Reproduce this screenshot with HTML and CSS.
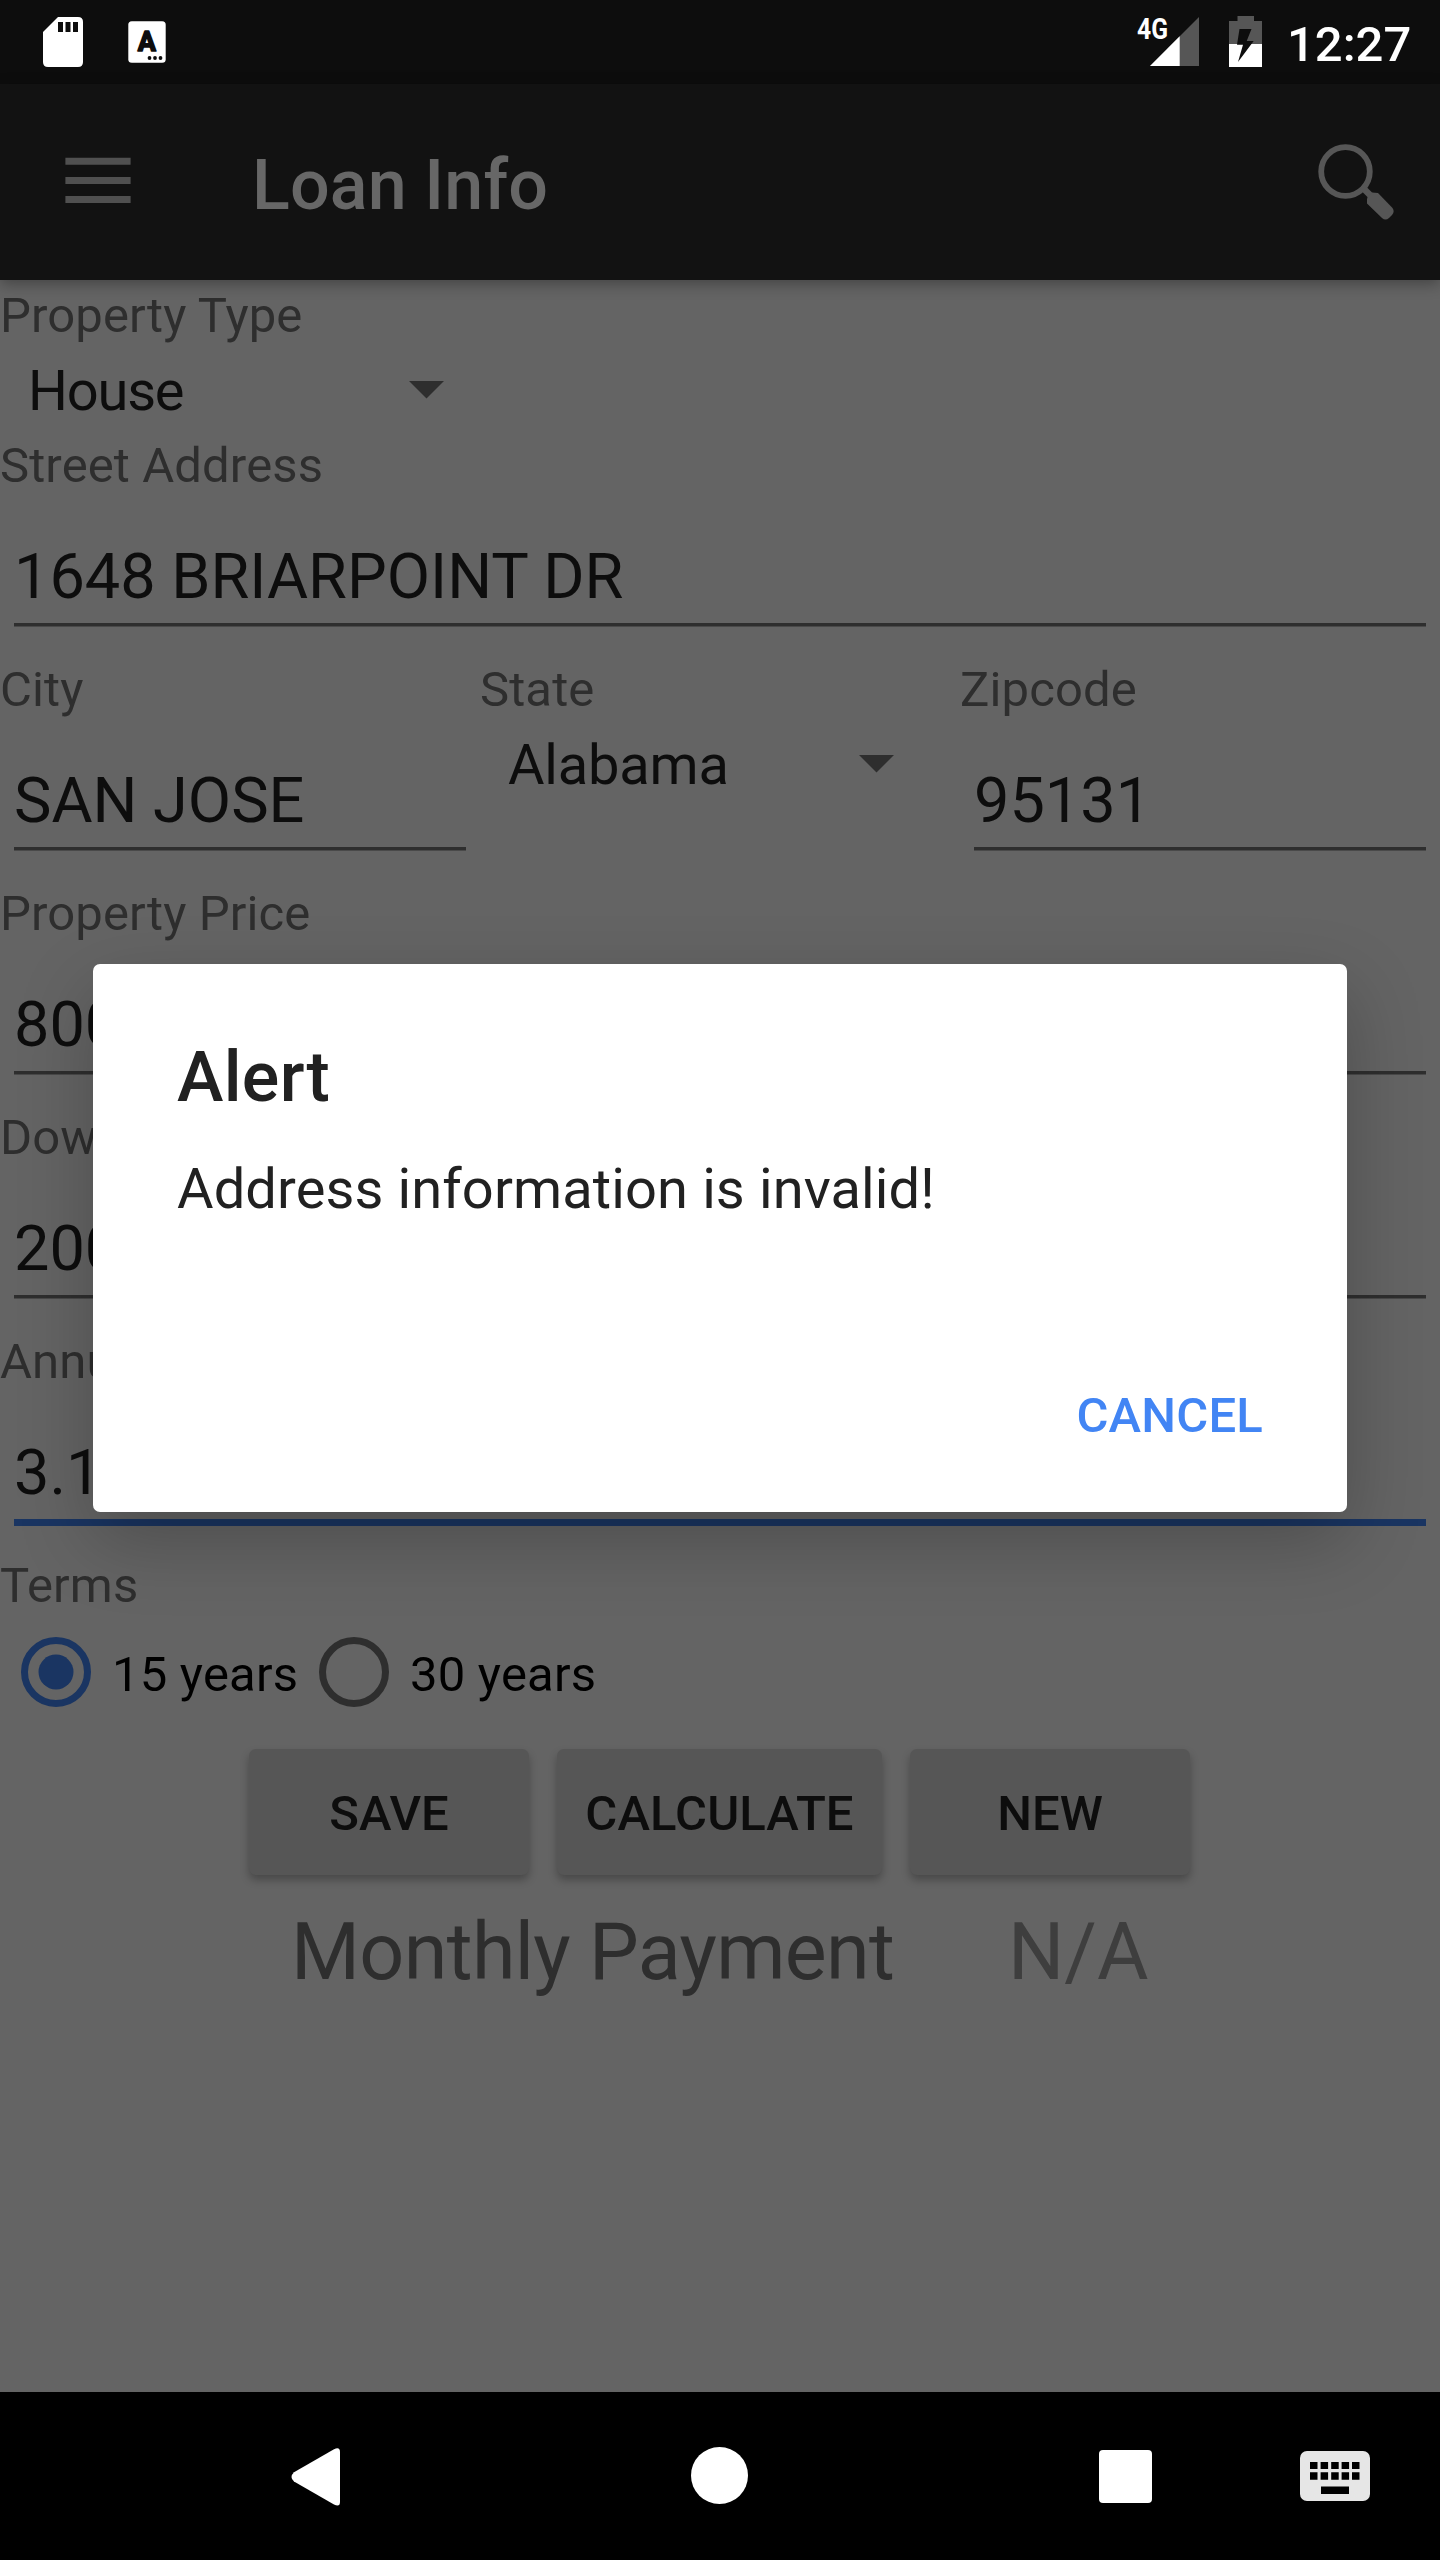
FILE: index.html
```html
<!DOCTYPE html>
<html lang="en">
<head>
<meta charset="utf-8">
<title>Loan Info</title>
<link rel="stylesheet" href="styles.css">
</head>
<body>
<div class="screen">
  <header class="status">
    <svg class="sd" width="40" height="50" viewBox="0 0 40 50"><path fill="#fff" d="M15 0H35Q40 0 40 5V45Q40 50 35 50H5Q0 50 0 45V15Z"/><path fill="#0d0d0d" d="M15 5h5v10h-5zM22.500 5h5v10h-5zM30 5h5v10h-5z"/></svg>
    <svg class="lang" width="38" height="42" viewBox="0 0 38 42"><rect x=".3" y=".3" width="37.400" height="41.400" rx="3.500" fill="#fff"/><text class="lang-letter" x="18.800" y="30" text-anchor="middle">A</text><g fill="#0d0d0d"><circle cx="21.500" cy="37" r="1.900"/><circle cx="27" cy="37" r="1.900"/><circle cx="32.500" cy="37" r="1.900"/></g></svg>
    <span class="network">4G</span>
    <svg class="signal" width="49" height="49" viewBox="0 0 49 49"><path fill="#565656" d="M49 0V49H0Z"/><path fill="#fff" d="M29.700 19.300V49H0Z"/></svg>
    <svg class="battery" width="33" height="51" viewBox="0 0 33 51"><path fill="#565656" d="M8.500 0h16.500v5H33v23H0V5h8.500z"/><path fill="#fff" d="M0 28h33v23H0z"/><path fill="#0d0d0d" d="M10.500 13h12L17.700 25h7L9 46l5-17.300H8z"/></svg>
    <span class="clock">12:27</span>
  </header>
  <nav class="toolbar">
    <svg class="menu" width="66" height="47" viewBox="0 0 66 47"><path fill="#505050" d="M.4.800h65.200v7H.4zM.4 19.900h65.200v7H.4zM.4 39h65.200v7H.4z"/></svg>
    <h1 class="title">Loan Info</h1>
    <svg class="search" width="78" height="78" viewBox="0 0 78 78"><circle cx="27.500" cy="27.500" r="24.300" fill="none" stroke="#565656" stroke-width="5.800"/><path stroke="#565656" stroke-width="6.500" d="M44 43l9 9"/><path fill="#565656" d="M49 55l1-3 4-3.500 6 .5 14.500 15q2.500 3.500-.5 7l-3 3q-3.500 3-7 0L49 59.500z"/></svg>
  </nav>
  <main class="form">
    <div class="label">Property Type</div>
    <div class="spinner spinner-type"><span>House</span><svg width="35" height="18" viewBox="0 0 35 18"><path d="M0 0h35L17.500 17.500z" fill="#2e2e2e"/></svg></div>
    <div class="label">Street Address</div>
    <div class="field"><div class="input">1648 BRIARPOINT DR</div></div>
    <div class="columns">
      <div><div class="label">City</div><div class="field"><div class="input">SAN JOSE</div></div></div>
      <div><div class="label">State</div><div class="spinner spinner-state"><span>Alabama</span><svg width="35" height="18" viewBox="0 0 35 18"><path d="M0 0h35L17.500 17.500z" fill="#2e2e2e"/></svg></div></div>
      <div><div class="label">Zipcode</div><div class="field"><div class="input">95131</div></div></div>
    </div>
    <div class="label">Property Price</div>
    <div class="field"><div class="input">800000</div></div>
    <div class="label">Down Payment</div>
    <div class="field"><div class="input">200000</div></div>
    <div class="label">Annual Rate</div>
    <div class="field"><div class="input focused">3.1</div></div>
    <div class="label">Terms</div>
    <div class="radios">
      <div class="radio"><svg width="70" height="70" viewBox="0 0 70 70"><circle cx="35" cy="35" r="31.500" fill="none" stroke="#1a3562" stroke-width="7"/><circle cx="35" cy="35" r="17.500" fill="#1a3562"/></svg><span>15 years</span></div>
      <div class="radio"><svg width="70" height="70" viewBox="0 0 70 70"><circle cx="35" cy="35" r="31.500" fill="none" stroke="#2e2e2e" stroke-width="7"/></svg><span>30 years</span></div>
    </div>
    <div class="buttons">
      <div class="button">SAVE</div>
      <div class="button wide">CALCULATE</div>
      <div class="button">NEW</div>
    </div>
    <div class="result"><span class="caption">Monthly Payment</span><span class="amount">N/A</span></div>
  </main>
  <footer class="navbar">
    <svg class="back" width="49" height="58" viewBox="0 0 49 58"><path fill="#fff" d="M43 1.200Q49-1.500 49 4V54Q49 59.500 43 56.500L3 33.500Q-2 29 3 24.200Z"/></svg>
    <svg class="home" width="57" height="57" viewBox="0 0 57 57"><circle cx="28.500" cy="28.500" r="28.500" fill="#fff"/></svg>
    <div class="recents"></div>
    <svg class="keyboard" width="70" height="50" viewBox="0 0 70 50"><rect width="70" height="50" rx="7" fill="#e6e6e6"/><path d="M10 11h7.500v7H10zM20.600 11h7.500v7h-7.500zM31.200 11h7.500v7h-7.500zM41.600 11h7.500v7h-7.500zM52 11h7.500v7H52zM10 21.300h7.500v7.500H10zM20.600 21.300h7.500v7.500h-7.500zM31.200 21.300h7.500v7.500h-7.500zM41.600 21.300h7.500v7.500h-7.500zM52 21.300h7.500v7.500H52zM21 35.500h28v7.500H21z"/></svg>
  </footer>
  <section class="dialog">
    <h2>Alert</h2>
    <p>Address information is invalid!</p>
    <div class="cancel">CANCEL</div>
  </section>
</div>
</body>
</html>
```
FILE: styles.css
```css
* { box-sizing: border-box; }
body { margin: 0; background: #000; font-family: Roboto, sans-serif; }
svg { display: block; flex: none; }
.screen { position: relative; width: 1440px; height: 2560px; display: flex; flex-direction: column; background: #646464; overflow: hidden; }

.status { height: 84px; flex: none; display: flex; align-items: flex-start; background: #0d0d0d; color: #fff; padding-left: 43px; }
.sd { margin-top: 17px; }
.lang { margin: 21px 0 0 45px; }
.lang-letter { font: 700 27px Roboto, sans-serif; fill: #0d0d0d; stroke: #0d0d0d; stroke-width: 1.6px; stroke-linejoin: round; }
.network { width: 30px; margin: 12px 0 0 971px; font-size: 29px; line-height: 34px; font-weight: 700; white-space: nowrap; transform: scaleX(.85); transform-origin: 0 0; }
.signal { margin: 17px 0 0 -17px; }
.battery { margin: 16px 0 0 30px; }
.clock { margin: 16px 0 0 25px; font-size: 49px; line-height: 58px; font-weight: 500; }

.toolbar { height: 196px; flex: none; display: flex; align-items: flex-start; background: #121212; padding-left: 65px; box-shadow: 0 4px 14px rgba(0, 0, 0, .32); position: relative; }
.menu { margin-top: 73px; }
.title { width: 400px; margin: 60px 0 0 121px; font-size: 70px; line-height: 82px; font-weight: 500; letter-spacing: .15px; color: #676767; }
.search { margin: 60px 0 0 666px; }

.form { height: 2112px; flex: none; }
.label { height: 66px; padding-top: 5px; font-size: 49px; line-height: 62px; letter-spacing: .12px; color: #2e2e2e; white-space: nowrap; }
.spinner { height: 84px; padding: 6px 0 0 28px; display: flex; justify-content: space-between; font-size: 56px; line-height: 78px; color: #0d0d0d; }
.spinner svg { margin-top: 29px; }
.spinner-type { width: 443.500px; letter-spacing: -1.2px; }
.spinner-state { width: 413.500px; letter-spacing: -.2px; }
.field { height: 158px; padding: 0 14px; }
.input { height: 130px; padding-top: 44px; font-size: 63px; line-height: 74px; color: #0d0d0d; border-bottom: 3px solid #2e2e2e; box-shadow: 0 1px #494949; white-space: nowrap; }
.input.focused { height: 134px; border-bottom: 7px solid #1a3562; box-shadow: none; }
.columns { display: grid; grid-template-columns: repeat(3, 1fr); }

.radios { height: 112px; display: flex; }
.radio { width: 298px; display: flex; padding: 21px 0 0 21px; font-size: 49px; line-height: 58px; letter-spacing: .2px; color: #000; white-space: nowrap; }
.radio span { margin: 9px 0 0 21px; }

.buttons { margin-top: 21px; padding-left: 249px; display: flex; gap: 28px; }
.button { width: 280px; height: 126px; padding-top: 2px; border-radius: 7px; background: #565656; color: #0d0d0d; font-size: 49px; line-height: 126px; font-weight: 500; text-align: center; box-shadow: 0 5px 8px rgba(0, 0, 0, .28); }
.wide { width: 325px; letter-spacing: .1px; }
.result { display: flex; padding-left: 291px; margin-top: 31px; font-size: 79px; line-height: 92px; color: #2e2e2e; white-space: nowrap; }
.caption { width: 717px; letter-spacing: -.65px; }
.amount { color: #3e3e3e; }

.navbar { height: 168px; flex: none; display: flex; align-items: flex-start; background: #000; padding-left: 291px; }
.back { margin-top: 56px; }
.home { margin: 55px 0 0 351px; }
.recents { width: 53px; height: 53px; margin: 58px 0 0 351px; background: #fff; border-radius: 4px; }
.keyboard { margin: 59px 0 0 148px; }

.dialog { position: absolute; left: 93px; top: 964px; width: 1254px; height: 548px; padding: 71px 84px 0; background: #fff; border-radius: 7px; color: #212121; box-shadow: 0 28px 76px rgba(0, 0, 0, .24); }
.dialog h2 { margin: 0; font-size: 70px; line-height: 84px; font-weight: 500; letter-spacing: .3px; }
.dialog p { margin: 37px 0 0; font-size: 56px; line-height: 66px; letter-spacing: .12px; }
.cancel { margin-top: 165px; text-align: right; font-size: 49px; line-height: 58px; font-weight: 500; letter-spacing: .2px; color: #4285f4; }
```
